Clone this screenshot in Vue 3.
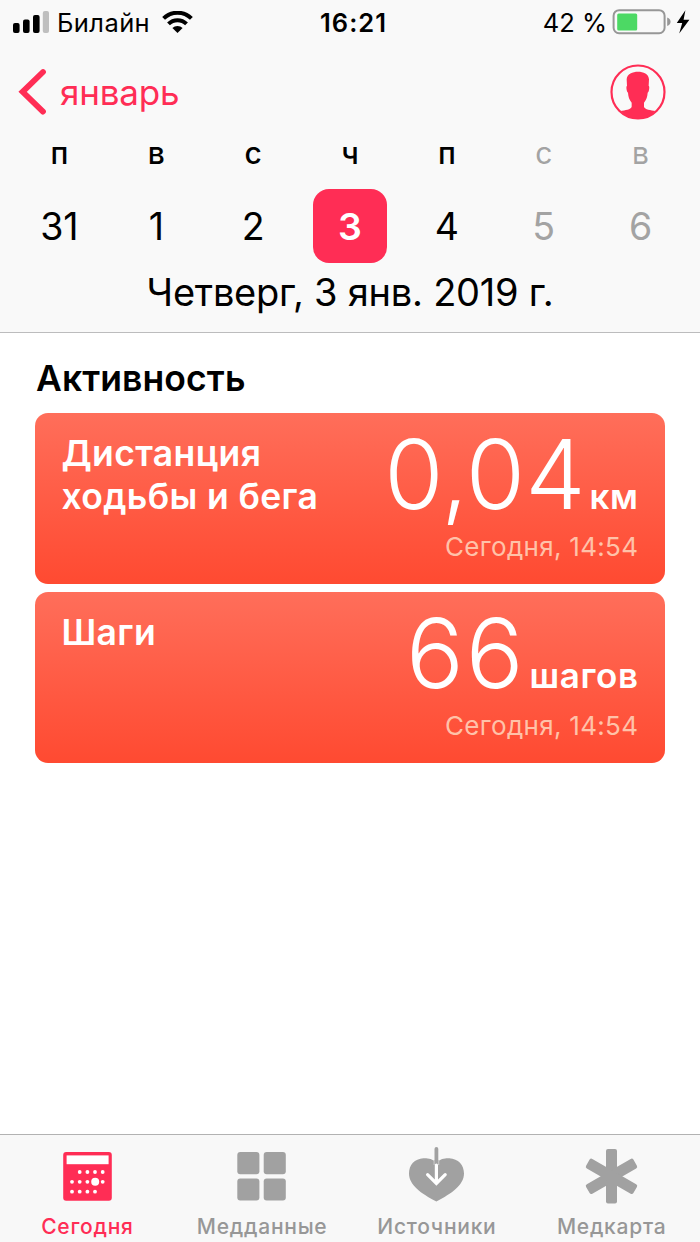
<template>
  <div class="screen">
    <header class="header">
      <!-- Статус-бар -->
      <div class="status-bar">
        <div class="status-left">
          <svg class="signal" width="36" height="22" viewBox="0 0 36 22">
            <rect x="0" y="12" width="6.6" height="10" rx="2" />
            <rect x="10" y="8.5" width="6.6" height="13.5" rx="2" />
            <rect x="20" y="4" width="6.6" height="18" rx="2" />
            <rect class="dim" x="29.8" y="0" width="6.2" height="22" rx="2" />
          </svg>
          <span class="carrier">Билайн</span>
          <svg class="wifi" width="31" height="22" viewBox="0 0 31 22">
            <path d="M1.6 7.4A19.8 19.8 0 0 1 29.4 7.4" />
            <path d="M6.5 12.9A12.8 12.8 0 0 1 24.5 12.9" />
            <path class="dot" d="M10.4 17.1A7 7 0 0 1 20.6 17.1L15.5 22Z" />
          </svg>
        </div>
        <span class="clock">16:21</span>
        <div class="status-right">
          <span class="percent">42 %</span>
          <svg class="battery" width="78" height="26" viewBox="0 0 78 26">
            <rect class="shell" x="1.6" y="1.2" width="51" height="23" rx="5.5" />
            <path class="nub" d="M55.2 8.6Q58.6 10 58.6 12.8T55.2 17Z" />
            <rect class="level" x="5.2" y="4.4" width="20" height="17" rx="1.5" />
            <path d="M73.4 1.2L64.8 14H70.2L67.2 24.4L77.4 10.8H71.6Z" />
          </svg>
        </div>
      </div>

      <!-- Навигация -->
      <div class="nav">
        <a class="back">
          <svg width="29" height="48" viewBox="0 0 29 48">
            <path d="M25 4L4.6 23.8L25 43.6" />
          </svg>
          <span>январь</span>
        </a>
        <svg class="profile" width="56" height="56" viewBox="0 0 168 168">
          <circle cx="84" cy="84" r="79.5" />
          <path
            d="M84 23C68 23 51 29 50 46L51 66Q48 67 50 78Q51 85 54 86C55 98 57 106 65 116L65 128C63 137 45 138 32 141Q54 164 84 164T136 141C123 138 104 137 102 128L102 116C110 106 112 98 113 86Q116 85 117 78Q119 67 116 66L117 46C116 29 100 23 84 23Z"
          />
        </svg>
      </div>

      <!-- Неделя -->
      <div class="week">
        <div
          v-for="(day, i) in days"
          :key="i"
          class="day"
          :class="{ weekend: day.weekend, selected: day.selected }"
        >
          <span class="day-name">{{ day.name }}</span>
          <span class="day-number">{{ day.number }}</span>
        </div>
      </div>
      <div class="full-date">Четверг, 3 янв. 2019 г.</div>
    </header>

    <main class="content">
      <h2 class="section-title">Активность</h2>
      <div class="cards">
        <div v-for="card in cards" :key="card.title" class="card">
          <div class="card-title">{{ card.title }}</div>
          <div class="card-data">
            <div class="card-value">
              <span class="amount" :class="{ whole: card.whole }">{{
                card.value
              }}</span>
              <span class="unit">{{ card.unit }}</span>
            </div>
            <div class="card-time">{{ card.time }}</div>
          </div>
        </div>
      </div>
    </main>

    <!-- Нижние вкладки -->
    <nav class="tabs">
      <a
        v-for="tab in tabs"
        :key="tab.id"
        class="tab"
        :class="{ active: tab.id === 'today' }"
      >
        <svg width="60" height="60" viewBox="0 0 60 60">
          <g v-if="tab.id === 'today'">
            <rect x="6.2" y="7" width="48.6" height="48.7" rx="3" />
            <rect class="light" x="9.6" y="10.4" width="42" height="8.8" />
            <circle
              v-for="(dot, i) in dots"
              :key="i"
              class="light"
              :cx="dot[0]"
              :cy="dot[1]"
              :r="dot[2]"
            />
          </g>
          <g v-else-if="tab.id === 'data'">
            <rect x="5.3" y="7.1" width="22.1" height="22.1" rx="3" />
            <rect x="31.7" y="7.1" width="22.1" height="22.1" rx="3" />
            <rect x="5.3" y="33.5" width="22.1" height="22.1" rx="3" />
            <rect x="31.7" y="33.5" width="22.1" height="22.1" rx="3" />
          </g>
          <g v-else-if="tab.id === 'sources'">
            <path
              d="M29.4 18C25.5 13.4 20.5 13.2 16.5 13.3C7.5 13.8 2 20 2 28.5C2 40 14 48.5 29.4 56.4C44.8 48.5 57 40 57 28.5C57 20 51.3 13.8 42.3 13.3C38.3 13.2 33.3 13.4 29.4 18Z"
            />
            <path class="gap" d="M29.4 15V20" />
            <path class="stem" d="M29.4 4V19" />
            <path class="arrow" d="M29.4 20V38M20.6 29.6L29.4 38.4L38.2 29.6" />
          </g>
          <g v-else>
            <rect
              v-for="angle in [0, 60, 120]"
              :key="angle"
              x="24"
              y="4"
              width="11"
              height="54.6"
              rx="2"
              :transform="`rotate(${angle} 29.5 31.3)`"
            />
          </g>
        </svg>
        <span class="tab-label">{{ tab.label }}</span>
      </a>
    </nav>
  </div>
</template>

<script setup>
const days = [
  { name: 'п', number: 31 },
  { name: 'в', number: 1 },
  { name: 'с', number: 2 },
  { name: 'ч', number: 3, selected: true },
  { name: 'п', number: 4 },
  { name: 'с', number: 5, weekend: true },
  { name: 'в', number: 6, weekend: true },
];

const cards = [
  {
    title: 'Дистанция ходьбы и бега',
    value: '0,04',
    unit: 'км',
    time: 'Сегодня, 14:54',
  },
  {
    title: 'Шаги',
    value: '66',
    whole: true,
    unit: 'шагов',
    time: 'Сегодня, 14:54',
  },
];

const tabs = [
  { id: 'today', label: 'Сегодня' },
  { id: 'data', label: 'Медданные' },
  { id: 'sources', label: 'Источники' },
  { id: 'card', label: 'Медкарта' },
];

// Точки календаря: x, y, радиус
const dots = [
  [22.7, 27, 1.9],
  [30.4, 27, 1.9],
  [38, 27, 1.9],
  [45.7, 27, 1.9],
  [15, 36.8, 1.9],
  [22.7, 36.8, 1.9],
  [30.4, 36.8, 1.9],
  [38.2, 36.8, 4],
  [45.7, 36.8, 1.9],
  [15, 46.7, 1.9],
  [22.7, 46.7, 1.9],
  [30.4, 46.7, 1.9],
  [38, 46.7, 1.9],
];
</script>

<style>
body {
  margin: 0;
  background: #fff;
}
</style>

<style scoped>
.screen {
  display: flex;
  flex-direction: column;
  width: 700px;
  height: 1242px;
  overflow: hidden;
  background: #fff;
  color: #000;
  font-family: Inter, 'Liberation Sans', sans-serif;
}

.header {
  padding-bottom: 11px;
  background: #f9f9f9;
  border-bottom: 1px solid #bcbcbd;
}

.status-bar {
  display: grid;
  grid-template-columns: 1fr auto 1fr;
  align-items: center;
  height: 45px;
  padding: 0 10px 0 13px;
  font-size: 25px;
  line-height: 45px;
}

.status-left,
.status-right {
  display: flex;
  align-items: center;
}

.status-right {
  justify-content: flex-end;
}

.signal,
.wifi,
.battery {
  margin-bottom: 1px;
}

.signal .dim {
  fill: #bfbfbf;
}

.carrier {
  margin: 0 12px 0 8px;
  font-size: 25.5px;
  letter-spacing: 0.4px;
}

.wifi path {
  fill: none;
  stroke: #000;
  stroke-width: 4;
}

.wifi .dot {
  fill: #000;
  stroke: none;
}

.clock {
  margin-left: 4px;
  font-size: 25.5px;
  font-weight: 600;
  letter-spacing: 1px;
}

.percent {
  margin-right: 5px;
  font-size: 25.5px;
}

.battery .shell {
  fill: none;
  stroke: #979797;
  stroke-width: 2;
}

.battery .nub {
  fill: #979797;
}

.battery .level {
  fill: #4cd964;
}

.nav {
  display: flex;
  align-items: center;
  justify-content: space-between;
  height: 94px;
  padding: 0 34px 0 18px;
}

.back {
  display: flex;
  align-items: center;
  gap: 13px;
  color: #ff2d55;
  font-size: 35px;
  letter-spacing: -0.2px;
}

.back path {
  fill: none;
  stroke: #ff2d55;
  stroke-width: 5.8;
  stroke-linecap: round;
}

.profile circle {
  fill: none;
  stroke: #ff2d55;
  stroke-width: 6.5;
}

.profile path {
  fill: #ff2d55;
}

.week {
  display: grid;
  grid-template-columns: repeat(7, 1fr);
  padding: 0 11px;
}

.day {
  display: flex;
  flex-direction: column;
  align-items: center;
  gap: 22px;
}

.day-name {
  font-size: 30px;
  font-weight: 500;
  line-height: 28px;
}

.day-number {
  width: 74px;
  height: 74px;
  border-radius: 16px;
  font-size: 37.5px;
  line-height: 75px;
  text-align: center;
}

.weekend {
  color: #a3a3a3;
}

.weekend .day-name {
  font-weight: 400;
}

.selected .day-number {
  background: #ff2d55;
  color: #fff;
  font-weight: 600;
}

.full-date {
  height: 58px;
  font-size: 38px;
  line-height: 59px;
  letter-spacing: -0.25px;
  text-align: center;
}

.content {
  flex: 1;
  padding: 11px 35px 0;
}

.section-title {
  margin: 0 0 0 1px;
  font-size: 35.5px;
  font-weight: 600;
  line-height: 69px;
  letter-spacing: 0.1px;
}

.cards {
  display: flex;
  flex-direction: column;
  gap: 8px;
}

.card {
  display: flex;
  justify-content: space-between;
  height: 171px;
  padding: 0 27px 0 26.5px;
  box-sizing: border-box;
  border-radius: 13px;
  background: linear-gradient(#ff6e5a, #ff4a31);
  color: #fff;
}

.card-title {
  width: 290px;
  padding-top: 18.5px;
  font-size: 35.5px;
  font-weight: 600;
  line-height: 43.6px;
  letter-spacing: 0.35px;
}

.card-data {
  padding-top: 21px;
  text-align: right;
}

.card-value {
  display: flex;
  align-items: baseline;
  justify-content: flex-end;
  gap: 4px;
  height: 80px;
  line-height: 80px;
}

.amount {
  font-size: 96px;
  font-weight: 300;
}

.amount.whole {
  letter-spacing: 2px;
}

.unit {
  margin-right: -0.6px;
  font-size: 35px;
  font-weight: 600;
  line-height: 35px;
  letter-spacing: 0.6px;
}

.card-time {
  margin: 17.5px -0.3px 0 0;
  color: #ffc2a9;
  font-size: 26px;
  line-height: 30px;
  letter-spacing: 0.3px;
}

.tabs {
  display: grid;
  grid-template-columns: repeat(4, 1fr);
  height: 107px;
  padding-right: 1px;
  border-top: 1px solid #b2b2b2;
  background: #f8f8f8;
}

.tab {
  display: flex;
  flex-direction: column;
  align-items: center;
  padding-top: 10px;
  color: #979797;
}

.tab svg {
  fill: #a1a1a1;
}

.tab.active {
  color: #ff2d55;
}

.tab.active svg {
  fill: #ff2d55;
}

.tab .light {
  fill: #fff;
}

.gap,
.stem,
.arrow {
  fill: none;
  stroke-linecap: round;
}

.tab .gap {
  stroke: #d0d0d0;
  stroke-width: 5.6;
  stroke-linecap: butt;
}

.tab .stem {
  stroke: #a1a1a1;
  stroke-width: 3.8;
}

.tab .arrow {
  stroke: #fff;
  stroke-width: 3.2;
}

.tab-label {
  margin-top: 7px;
  font-size: 21px;
  font-weight: 500;
  line-height: 30px;
  letter-spacing: 0.75px;
}
</style>
